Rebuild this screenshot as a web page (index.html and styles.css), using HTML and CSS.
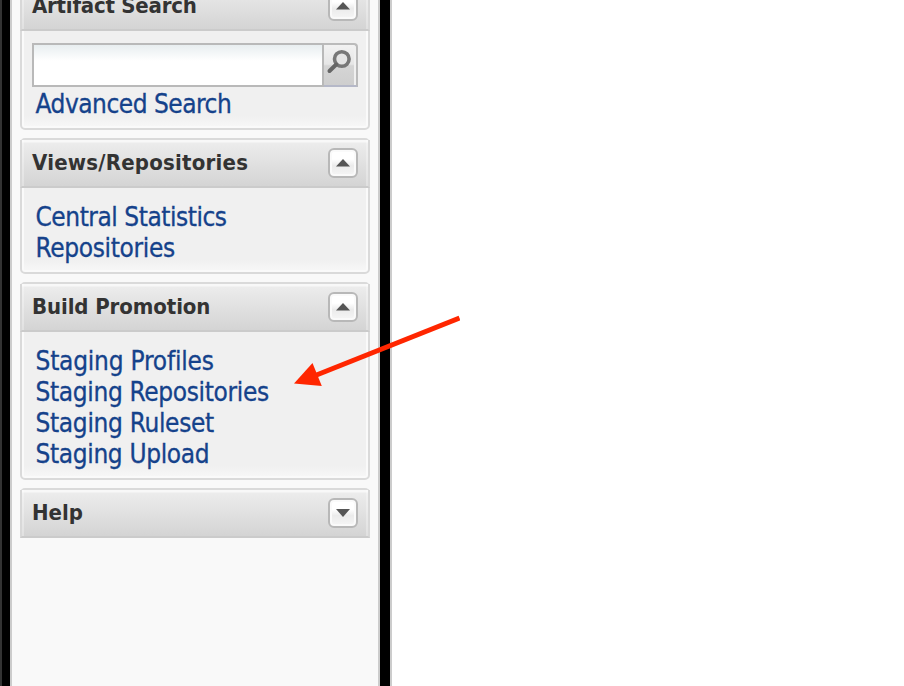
FILE: index.html
```html
<!DOCTYPE html>
<html lang="en">
<head>
<meta charset="utf-8">
<title>Repository Manager</title>
<link rel="stylesheet" href="styles.css">
</head>
<body>
<div class="app">
  <aside class="sidebar">
    <section class="panel">
      <header class="panel-head"><h2 class="w-artifact">Artifact Search</h2><button class="toggle" aria-label="Collapse"><svg viewBox="0 0 14 8"><path d="M7 0L14 7.5H0Z"/></svg></button></header>
      <div class="panel-body search-body">
        <form class="search">
          <input type="text" aria-label="Search">
          <button class="go" type="button" aria-label="Search"><svg viewBox="0 0 34 40"><circle cx="17.8" cy="14" r="7.3" fill="#e4e4e4" stroke="#777" stroke-width="3.6"/><path d="M12.2 19.5L5.5 26" stroke="#666" stroke-width="4" stroke-linecap="round"/></svg></button>
        </form>
        <a class="l-advanced">Advanced Search</a>
      </div>
    </section>
    <section class="panel">
      <header class="panel-head"><h2 class="w-views">Views/Repositories</h2><button class="toggle" aria-label="Collapse"><svg viewBox="0 0 14 8"><path d="M7 0L14 7.5H0Z"/></svg></button></header>
      <nav class="panel-body">
        <a class="l-central">Central Statistics</a>
        <a class="l-repos">Repositories</a>
      </nav>
    </section>
    <section class="panel">
      <header class="panel-head"><h2 class="w-build">Build Promotion</h2><button class="toggle" aria-label="Collapse"><svg viewBox="0 0 14 8"><path d="M7 0L14 7.5H0Z"/></svg></button></header>
      <nav class="panel-body">
        <a class="l-profiles">Staging Profiles</a>
        <a class="l-srepos">Staging Repositories</a>
        <a class="l-ruleset">Staging Ruleset</a>
        <a class="l-upload">Staging Upload</a>
      </nav>
    </section>
    <section class="panel collapsed">
      <header class="panel-head"><h2 class="w-help">Help</h2><button class="toggle" aria-label="Expand"><svg viewBox="0 0 14 8"><path d="M0 0H14L7 8Z"/></svg></button></header>
    </section>
  </aside>
  <div class="splitter"></div>
  <main class="content"></main>
  <svg class="arrow" viewBox="0 0 170 76"><path d="M169.5 6L24 64" stroke="#ff2600" stroke-width="5" fill="none"/><path d="M4 71.5L22.5 51L31.8 74Z" fill="#ff2600"/></svg>
</div>
</body>
</html>
```
FILE: styles.css
```css
* { box-sizing: border-box; }

body {
  margin: 0;
  background: #fff;
  font-family: "DejaVu Sans Condensed", "DejaVu Sans", sans-serif;
  font-stretch: condensed;
}

.app {
  position: relative;
  display: flex;
  height: 686px;
  overflow: hidden;
  border-left: 2px solid #333;
}

.sidebar {
  width: 378px;
  margin-top: -19px;
  padding: 0 8px 0 10px;
  display: flex;
  flex-direction: column;
  gap: 8px;
  border-left: 8px solid #000;
  border-right: 2px solid #ccc;
  background: #f9f9f9;
  box-shadow: inset 2px 0 #ccc;
}

.splitter {
  width: 12px;
  background: #000;
  border-right: 2px solid #ccc;
}

.content { flex: 1; }

.panel {
  border: 2px solid #dadada;
  border-radius: 5px;
  background: linear-gradient(#f0f0f0 calc(100% - 12px), #f8f8f8);
  box-shadow: inset 2px 0 #fafafa, inset -2px 0 #fafafa, inset 0 -2px #fafafa;
}

.panel.collapsed {
  border-bottom: 0;
  border-radius: 5px 5px 0 0;
}

.panel-head {
  display: flex;
  justify-content: space-between;
  height: 48px;
  margin: 0 -2px;
  padding: 8px 10px 0;
  border: solid #d8d8d8;
  border-width: 0 2px;
  border-bottom: 2px solid #cbcbcb;
  background: linear-gradient(#f8f8f8 0 2px, #ececec 3px, #d4d4d4);
  box-shadow: inset 2px 0 rgba(255, 255, 255, .3), inset -2px 0 rgba(255, 255, 255, .3);
}

h2 {
  margin: 0;
  color: #333;
  font-size: 22px;
  line-height: 30px;
  white-space: nowrap;
}

.w-artifact { letter-spacing: -.23px; }
.w-views { letter-spacing: .22px; }
.w-build { letter-spacing: -.1px; }

.toggle {
  display: flex;
  align-items: center;
  justify-content: center;
  width: 30px;
  height: 30px;
  padding: 0;
  border: 2px solid #b8b8b8;
  border-radius: 6px;
  background: linear-gradient(#fff 35%, #ebebeb 60%, #f6f6f6);
  box-shadow: inset 0 0 0 2px #fafafa;
}

.toggle svg { width: 14px; height: 8px; fill: #555; }

.panel-body {
  display: flex;
  flex-direction: column;
  padding: 14px 10px 8px;
}

.search-body { padding-top: 12px; }

.panel-body a {
  height: 31px;
  padding-left: 3.5px;
  color: #15428b;
  font-size: 26px;
  line-height: 31px;
  white-space: nowrap;
  -webkit-text-stroke: .3px #15428b;
}

.panel-body .l-advanced { letter-spacing: -.5px; }
.panel-body .l-central { letter-spacing: -.47px; }
.panel-body .l-repos { letter-spacing: -.35px; }
.panel-body .l-profiles { letter-spacing: -.22px; }
.panel-body .l-srepos { letter-spacing: -.35px; }
.panel-body .l-ruleset { letter-spacing: -.33px; }
.panel-body .l-upload { letter-spacing: -.36px; }

.search {
  display: flex;
  width: 326px;
  height: 44px;
  margin-bottom: 2px;
}

.search input {
  width: 292px;
  padding: 4px;
  border: 2px solid #b9b9b9;
  border-radius: 0;
  outline: 0;
  background: linear-gradient(#e8eef0, #fff 16px);
}

.go {
  width: 34px;
  padding: 0;
  border: solid #bbb;
  border-width: 2px 2px 2px 0;
  border-bottom-color: #b5b8c8;
  border-radius: 0 4px 0 0;
  background: linear-gradient(#f2f2f2, #e6e6e6 48%, #d5d5d5 52%, #cecece);
  box-shadow: inset -2px 0 #f0f0f0;
}

.go svg { display: block; width: 34px; height: 40px; }

.arrow {
  position: absolute;
  left: 288px;
  top: 312px;
  width: 170px;
  height: 76px;
}
```
